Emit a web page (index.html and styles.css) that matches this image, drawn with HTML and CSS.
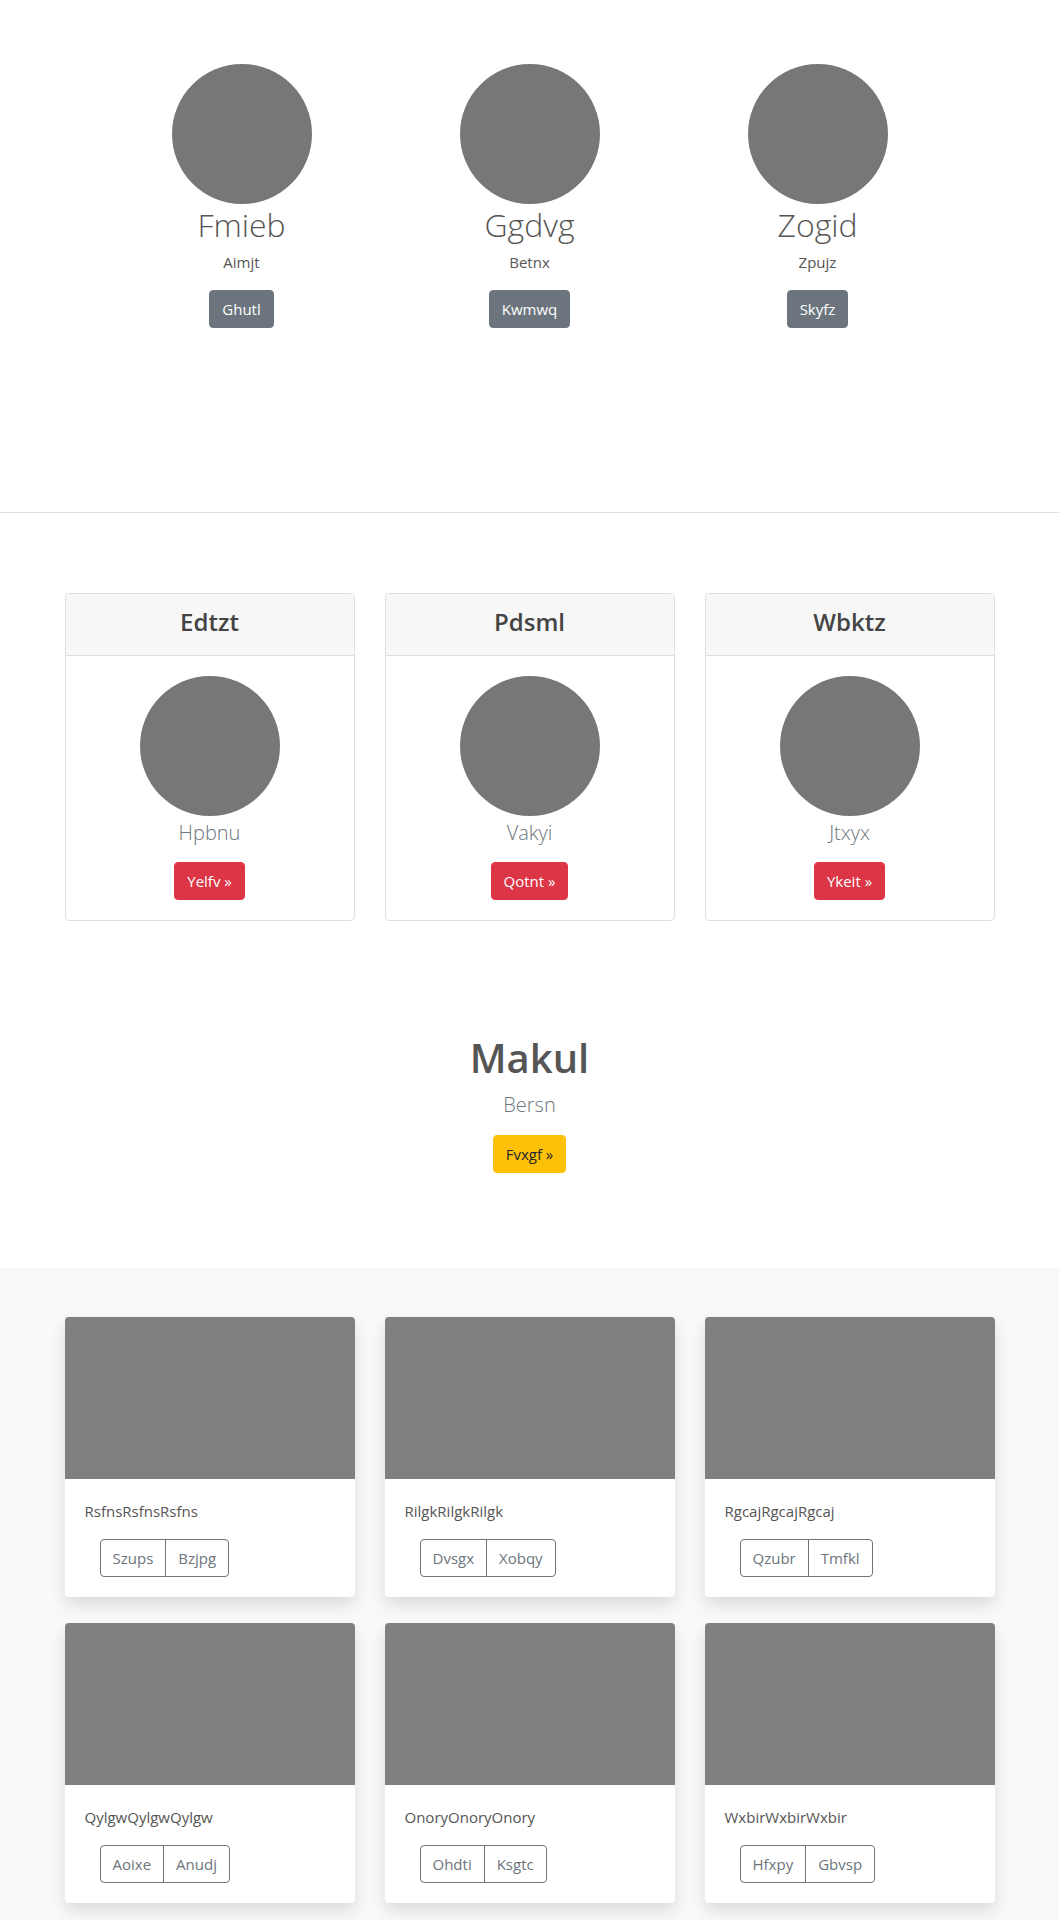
FILE: index.html
```html
<!DOCTYPE html>
<html lang="en">
<head>
<meta charset="utf-8">
<title>Page</title>
<link rel="stylesheet" href="styles.css">
</head>
<body>
<section class="team">
  <div class="team-row">
    <div class="member">
      <div class="avatar"></div>
      <h2 class="member-name">Fmieb</h2>
      <p class="member-role">Aimjt</p>
      <a class="btn btn-secondary">Ghutl</a>
    </div>
    <div class="member">
      <div class="avatar"></div>
      <h2 class="member-name">Ggdvg</h2>
      <p class="member-role">Betnx</p>
      <a class="btn btn-secondary">Kwmwq</a>
    </div>
    <div class="member">
      <div class="avatar"></div>
      <h2 class="member-name">Zogid</h2>
      <p class="member-role">Zpujz</p>
      <a class="btn btn-secondary">Skyfz</a>
    </div>
  </div>
</section>

<section class="deck-section">
  <div class="container">
    <div class="card-deck">
      <div class="card">
        <div class="card-header"><h4 class="card-head-title">Edtzt</h4></div>
        <div class="card-body center">
          <div class="avatar"></div>
          <p class="lead">Hpbnu</p>
          <a class="btn btn-danger">Yelfv »</a>
        </div>
      </div>
      <div class="card">
        <div class="card-header"><h4 class="card-head-title">Pdsml</h4></div>
        <div class="card-body center">
          <div class="avatar"></div>
          <p class="lead">Vakyi</p>
          <a class="btn btn-danger">Qotnt »</a>
        </div>
      </div>
      <div class="card">
        <div class="card-header"><h4 class="card-head-title">Wbktz</h4></div>
        <div class="card-body center">
          <div class="avatar"></div>
          <p class="lead">Jtxyx</p>
          <a class="btn btn-danger">Ykeit »</a>
        </div>
      </div>
    </div>
  </div>
</section>

<section class="hero">
  <h1 class="hero-title">Makul</h1>
  <p class="lead">Bersn</p>
  <a class="btn btn-warning">Fvxgf »</a>
</section>

<section class="album">
  <div class="container">
    <div class="album-grid">
      <div class="album-card">
        <div class="thumb"></div>
        <div class="album-body">
          <p class="album-text">RsfnsRsfnsRsfns</p>
          <div class="btn-group"><a class="btn btn-outline">Szups</a><a class="btn btn-outline">Bzjpg</a></div>
        </div>
      </div>
      <div class="album-card">
        <div class="thumb"></div>
        <div class="album-body">
          <p class="album-text">RilgkRilgkRilgk</p>
          <div class="btn-group"><a class="btn btn-outline">Dvsgx</a><a class="btn btn-outline">Xobqy</a></div>
        </div>
      </div>
      <div class="album-card">
        <div class="thumb"></div>
        <div class="album-body">
          <p class="album-text">RgcajRgcajRgcaj</p>
          <div class="btn-group"><a class="btn btn-outline">Qzubr</a><a class="btn btn-outline">Tmfkl</a></div>
        </div>
      </div>
      <div class="album-card">
        <div class="thumb"></div>
        <div class="album-body">
          <p class="album-text">QylgwQylgwQylgw</p>
          <div class="btn-group"><a class="btn btn-outline">Aoixe</a><a class="btn btn-outline">Anudj</a></div>
        </div>
      </div>
      <div class="album-card">
        <div class="thumb"></div>
        <div class="album-body">
          <p class="album-text">OnoryOnoryOnory</p>
          <div class="btn-group"><a class="btn btn-outline">Ohdti</a><a class="btn btn-outline">Ksgtc</a></div>
        </div>
      </div>
      <div class="album-card">
        <div class="thumb"></div>
        <div class="album-body">
          <p class="album-text">WxbirWxbirWxbir</p>
          <div class="btn-group"><a class="btn btn-outline">Hfxpy</a><a class="btn btn-outline">Gbvsp</a></div>
        </div>
      </div>
    </div>
  </div>
</section>
</body>
</html>
```

FILE: styles.css
```css
* { box-sizing: border-box; }

body {
  margin: 0;
  font-family: "Segoe UI", "Open Sans", "Noto Sans", sans-serif;
  font-size: 16px;
  line-height: 1.5;
  color: #555;
  background: #fff;
}

h1, h2, h4, p { margin: 0; }

.container {
  width: 960px;
  margin: 0 auto;
  padding: 0 15px;
}

.avatar {
  width: 140px;
  height: 140px;
  border-radius: 50%;
  background: #777;
  margin: 0 auto;
}

.btn {
  display: inline-block;
  font-size: 15px;
  line-height: 24px;
  padding: 6px 12px;
  border: 1px solid transparent;
  border-radius: 4px;
  text-decoration: none;
  cursor: pointer;
}

.btn-secondary { background: #6c757d; color: #fff; border-color: #6c757d; }
.btn-danger { background: #dc3545; color: #fff; border-color: #dc3545; }
.btn-warning { background: #ffc107; color: #212529; border-color: #ffc107; }

/* team */
.team {
  height: 513px;
  padding-top: 64px;
  border-bottom: 1px solid #dfdfdf;
}
.team-row {
  display: flex;
  justify-content: center;
}
.member {
  width: 288px;
  text-align: center;
}
.member-name {
  font-size: 32px;
  font-weight: 300;
  line-height: 1.2;
  margin-top: 2px;
  color: #555;
}
.member-role {
  font-size: 15px;
  margin-top: 7px;
  margin-bottom: 16px;
  color: #555;
}

/* card deck */
.deck-section { padding-top: 80px; }
.card-deck {
  display: flex;
  gap: 30px;
}
.card {
  flex: 1 1 0;
  border: 1px solid #dfdfdf;
  border-radius: 4px;
  background: #fff;
  overflow: hidden;
}
.card-header {
  background: #f7f7f7;
  border-bottom: 1px solid #dfdfdf;
  padding: 10px 20px 15px;
  text-align: center;
}
.card-head-title {
  font-size: 24px;
  font-weight: 600;
  line-height: 1.5;
  color: #444;
}
.card-body { padding: 20px; }
.center { text-align: center; }
.lead {
  font-size: 20px;
  font-weight: 300;
  line-height: 1.5;
  color: #6c757d;
}
.card-body .lead { margin-top: 2px; margin-bottom: 14px; }

/* hero */
.hero {
  text-align: center;
  padding-top: 113px;
  height: 347px;
}
.hero-title {
  font-size: 40px;
  font-weight: 600;
  line-height: 1.2;
  color: #555;
}
.hero .lead { margin-top: 8px; margin-bottom: 15px; }

/* album */
.album {
  background: #f8f9fa;
  padding: 49px 0 48px;
}
.album-grid {
  display: grid;
  grid-template-columns: repeat(3, 1fr);
  column-gap: 30px;
  row-gap: 26px;
}
.album-card {
  background: #fff;
  border-radius: 4px;
  overflow: hidden;
  box-shadow: 0 8px 16px rgba(0, 0, 0, 0.12);
}
.thumb {
  height: 162px;
  background: #808080;
}
.album-body { padding: 20px; }
.album-text {
  font-size: 15px;
  line-height: 24px;
  margin-bottom: 16px;
  color: #555;
}
.btn-group {
  display: inline-flex;
  margin-left: 15px;
}
.btn-outline {
  background: transparent;
  color: #6c757d;
  border-color: #6c757d;
}
.btn-group .btn-outline:first-child {
  border-top-right-radius: 0;
  border-bottom-right-radius: 0;
}
.btn-group .btn-outline + .btn-outline {
  margin-left: -1px;
  border-top-left-radius: 0;
  border-bottom-left-radius: 0;
}
```
